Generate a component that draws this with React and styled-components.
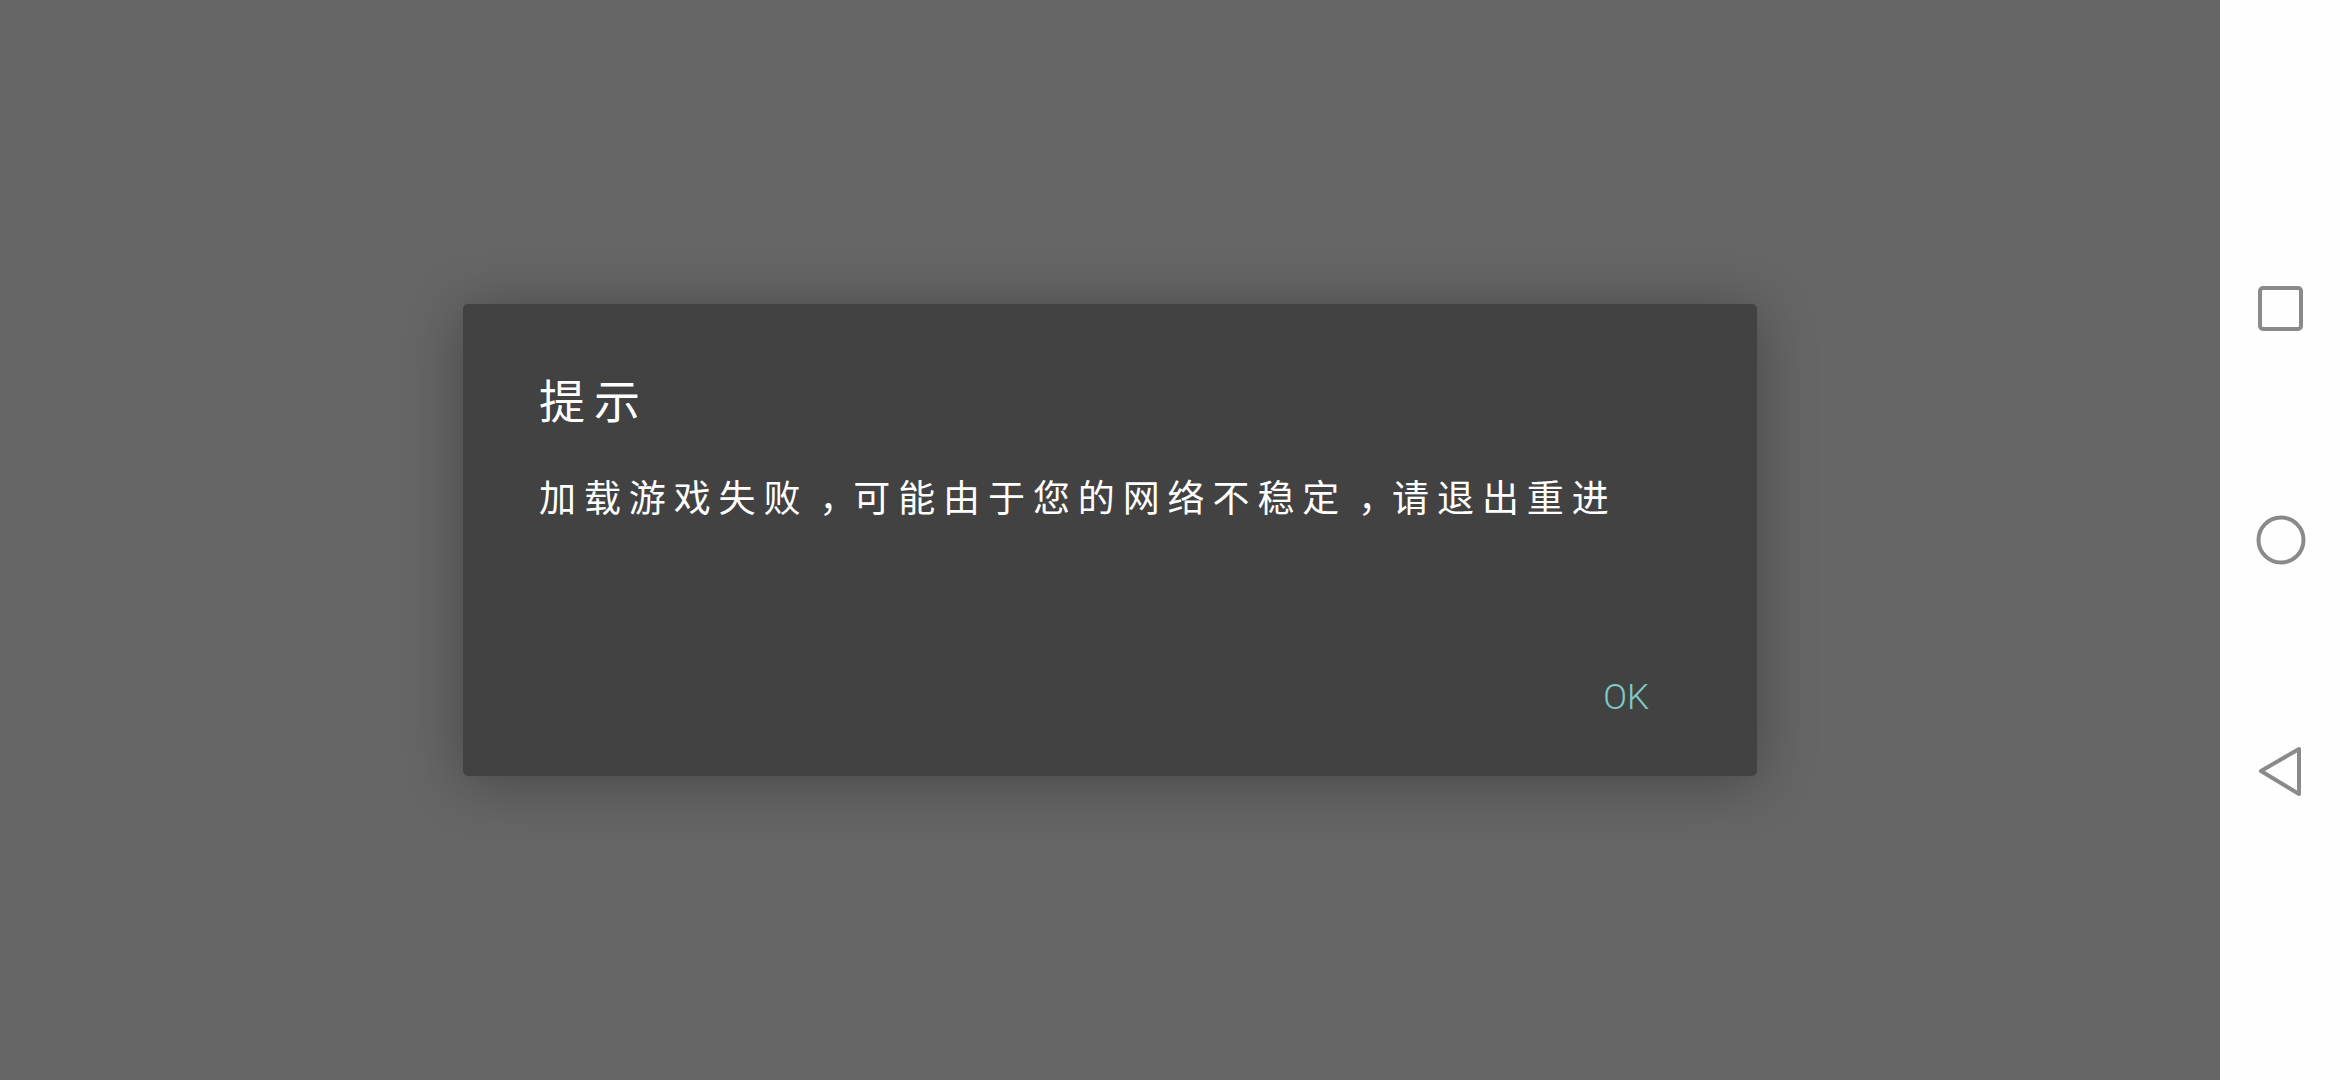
import styled, { createGlobalStyle } from "styled-components";

const GlobalStyle = createGlobalStyle`
    html, body, #root {
        margin: 0;
        height: 100%;
    }
    body {
        font-family: "Noto Sans CJK SC", "Noto Sans", sans-serif;
    }
`;

const Screen = styled.div`
    display: flex;
    width: 2340px;
    height: 1080px;
    overflow: hidden;
`;

const GameArea = styled.main`
    flex: 1;
    display: flex;
    align-items: center;
    justify-content: center;
    background-color: #666666;
`;

const Dialog = styled.section`
    display: flex;
    flex-direction: column;
    box-sizing: border-box;
    width: 1294px;
    height: 472px;
    padding: 63px 108px 58px 76px;
    background-color: #424242;
    border-radius: 5px;
    box-shadow: 0 6px 60px rgba(0, 0, 0, 0.32);
`;

const Title = styled.h2`
    margin: 0;
    font-size: 46px;
    line-height: 62px;
    font-weight: 400;
    letter-spacing: 9px;
    color: #ffffff;
`;

const Message = styled.p`
    margin: 41px 0 0;
    font-size: 37px;
    line-height: 52px;
    font-weight: 400;
    letter-spacing: 7.9px;
    white-space: nowrap;
    color: #ffffff;
`;

// the commas sit in the middle of their cell in the reference
const Comma = styled.span`
    display: inline-block;
    width: 44.9px;
    text-align: center;
    letter-spacing: 0;
    font-feature-settings: "palt";
`;

const Footer = styled.div`
    display: flex;
    justify-content: flex-end;
    margin-top: auto;
`;

const OkButton = styled.button`
    padding: 0;
    border: none;
    background: none;
    font-family: Roboto, "Noto Sans", sans-serif;
    font-size: 35px;
    line-height: 40px;
    font-weight: 300;
    color: #80cbc4;
    cursor: pointer;
`;

const NavBar = styled.nav`
    display: flex;
    flex-direction: column;
    align-items: center;
    justify-content: center;
    gap: 172px;
    width: 120px;
    background-color: #fefefe;
`;

const NavIcon = styled.svg`
    display: block;
    width: 60px;
    height: 60px;
    fill: none;
    stroke: #8a8a8a;
    stroke-width: 4px;
    stroke-linejoin: round;
`;

export default function App() {
    return (
        <Screen>
            <GlobalStyle />
            <GameArea>
                <Dialog>
                    <Title>提示</Title>
                    <Message>
                        加载游戏失败<Comma>，</Comma>可能由于您的网络不稳定<Comma>，</Comma>请退出重进
                    </Message>
                    <Footer>
                        <OkButton>OK</OkButton>
                    </Footer>
                </Dialog>
            </GameArea>
            <NavBar>
                <NavIcon viewBox="0 0 60 60">
                    <rect x="10" y="10" width="41" height="41" rx="3" />
                </NavIcon>
                <NavIcon viewBox="0 0 60 60">
                    <circle cx="31" cy="30" r="22.5" />
                </NavIcon>
                <NavIcon viewBox="0 0 60 60">
                    <path d="M11 29 L49 7 L49 52 Z" />
                </NavIcon>
            </NavBar>
        </Screen>
    );
}
